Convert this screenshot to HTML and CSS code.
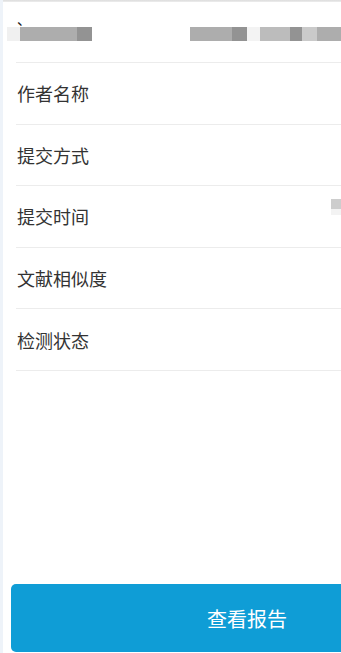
FILE: index.html
```html
<!DOCTYPE html>
<html lang="zh-CN">
<head>
<meta charset="utf-8">
<title>检测报告</title>
<link rel="stylesheet" href="styles.css">
</head>
<body>
<div class="page">
  <div class="strip"></div>
  <div class="card">
    <div class="topline"></div>
    <ul class="list">
      <li class="row row-first">
        <div class="blur blur-left">
          <i class="px light w13"></i><i class="px mid w57"></i><i class="px dark w15"></i>
        </div>
        <span class="mark">、</span>
        <div class="blur blur-right">
          <i class="px mid w42"></i><i class="px dark w15"></i><i class="px pale w13"></i><i class="px soft w30"></i><i class="px dark w12"></i><i class="px lite w15"></i><i class="px mid w24"></i>
        </div>
      </li>
      <li class="row"><span class="label">作者名称</span></li>
      <li class="row"><span class="label">提交方式</span></li>
      <li class="row"><span class="label">提交时间</span><span class="val-blur"></span></li>
      <li class="row"><span class="label">文献相似度</span></li>
      <li class="row"><span class="label">检测状态</span></li>
    </ul>
    <div class="spacer"></div>
    <button class="btn" type="button">查看报告</button>
  </div>
</div>
</body>
</html>
```

FILE: styles.css
```css
html, body {
  margin: 0;
  padding: 0;
  overflow: hidden;
  background: #ffffff;
}
body {
  font-family: "Noto Sans CJK SC", "Noto Sans", sans-serif;
  color: #333333;
}
.page {
  display: flex;
  height: 653px;
  width: 341px;
}
.strip {
  width: 3px;
  flex: none;
  background: #eef3f9;
}
.card {
  flex: 1;
  min-width: 0;
  display: flex;
  flex-direction: column;
  background: #ffffff;
}
.topline {
  height: 2px;
  background: linear-gradient(#dcdcdc, #ededed);
}
.list {
  list-style: none;
  margin: 0;
  padding: 0 0 0 13px;
}
.row {
  height: 60.6px;
  border-bottom: 1px solid #ececec;
  display: flex;
  align-items: center;
  position: relative;
}
.row-first {
  height: 60px;
}
.label {
  font-size: 18px;
  line-height: 1;
  padding-left: 1px;
}
.mark {
  position: absolute;
  left: 1px;
  top: 10px;
  font-size: 14px;
  line-height: 1;
  color: #222;
  z-index: 1;
}
.blur {
  display: flex;
  height: 14px;
  position: absolute;
  top: 25px;
}
.blur-left { left: -9px; }
.blur-right { left: 174px; }
.px { display: block; height: 14px; flex: none; }
.light { background: #f0f0f0; }
.pale { background: #f3f3f3; }
.mid { background: #adadad; }
.soft { background: #bcbcbc; }
.lite { background: #cacaca; }
.dark { background: #939393; }
.w12 { width: 12px; }
.w13 { width: 13px; }
.w15 { width: 15px; }
.w24 { width: 24px; }
.w30 { width: 30px; }
.w42 { width: 42px; }
.w57 { width: 57px; }
.val-blur {
  position: absolute;
  right: 0;
  top: 13px;
  width: 10px;
  height: 10px;
  background: #cdcdcd;
  box-shadow: 0 6px 0 #f3f3f3;
}
.spacer {
  flex: 1;
}
.btn {
  margin: 0 0 1px 8px;
  height: 68px;
  border: none;
  border-radius: 5px 0 0 5px;
  background: #0f9dd6;
  color: #ffffff;
  font-family: "Noto Sans CJK SC", "Noto Sans", sans-serif;
  font-size: 20px;
  padding: 0 0 0 142px;
  flex: none;
}
```
